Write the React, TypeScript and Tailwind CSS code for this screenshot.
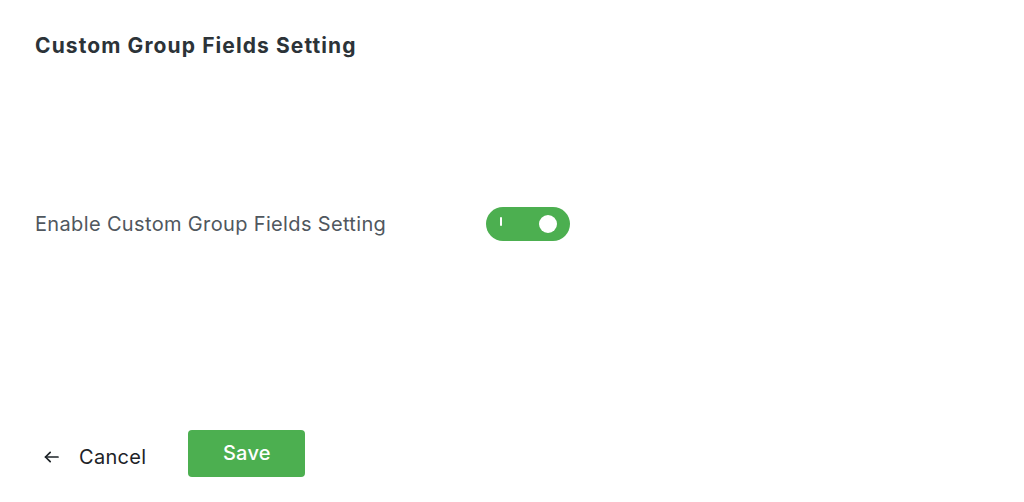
import React from "react";

export default function App() {
  return (
    <div className="w-[1024px] h-[502px] bg-white relative" style={{ fontFamily: "Inter, 'Noto Sans', sans-serif" }}>
      <div className="flex flex-col h-full px-[35px]">
        <h1 className="pt-[33px] text-[21px] leading-[26px] font-bold tracking-[1.1px] text-[#2c3338]">Custom Group Fields Setting</h1>
        <div className="mt-[148px] flex items-center">
          <span className="w-[451px] text-[20px] leading-[24px] tracking-[0.35px] text-[#50575e]">Enable Custom Group Fields Setting</span>
          <button className="relative w-[84px] h-[34px] rounded-full bg-[#4caf50] flex items-center">
            <span className="absolute left-[14px] top-[10px] w-[2px] h-[9px] bg-white rounded-sm" />
            <span className="absolute right-[13px] top-[8px] w-[18px] h-[18px] rounded-full bg-white" />
          </button>
        </div>
        <div className="mt-auto mb-[25px] flex items-center">
          <button className="flex items-center text-[20px] tracking-[0.3px] text-[#1d2327] ml-[9px] pt-[6px]">
            <svg width="15" height="12" viewBox="0 0 15 12" fill="none" stroke="#1d2327" strokeWidth="1.7" strokeLinecap="round" strokeLinejoin="round" className="mr-[20px] mt-[1px]">
              <path d="M14 6H1.5" />
              <path d="M6.2 1.3L1.5 6l4.7 4.7" />
            </svg>
            <span>Cancel</span>
          </button>
          <button className="ml-[42px] w-[117px] h-[47px] rounded-[4px] bg-[#4caf50] text-white text-[20px] tracking-[0.3px] font-medium pb-[2px]">Save</button>
        </div>
      </div>
    </div>
  );
}
